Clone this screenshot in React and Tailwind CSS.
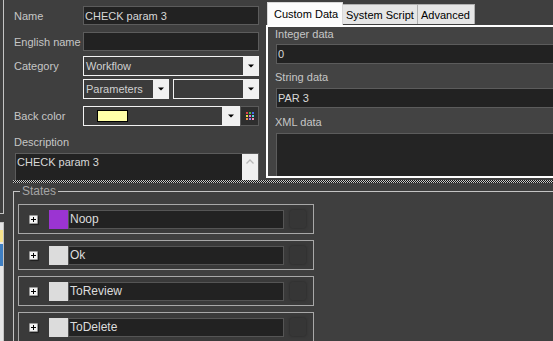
const Arrow = () => (
  <svg width="6" height="4" viewBox="0 0 6 4"><path d="M0 0.5h6L3 3.5z" fill="#000" /></svg>
);

function Combo({ w, text }) {
  return (
    <div className={`${w} h-[20px] border border-[#f2f2f2] bg-[#3b3b3b] flex items-stretch`}>
      <div className="flex-1 flex items-center pl-[2px] text-[#d0d0d0] whitespace-nowrap overflow-hidden">{text}</div>
      <div className="w-[15px] bg-[#f0f0f0] flex items-center justify-center">
        <Arrow />
      </div>
    </div>
  );
}

function TextBox({ w, text, h = "h-[19px]" }) {
  return (
    <div className={`${w} ${h} border border-[#5c5c5c] bg-[#222222] flex items-center pl-[1px] text-[#d8d8d8] whitespace-nowrap`}>
      {text}
    </div>
  );
}

function Plus() {
  return (
    <div className="w-[9px] h-[9px] bg-[#f2f2f2] border border-[#9a9a9a] rounded-[1px] flex items-center justify-center shadow-[1px_1px_1px_rgba(0,0,0,0.5)]">
      <svg width="5" height="5" viewBox="0 0 5 5"><path d="M0 2.5h5M2.5 0v5" stroke="#000" strokeWidth="1" /></svg>
    </div>
  );
}

function StateRow({ name, color }) {
  return (
    <div className="w-[296px] h-[30px] shrink-0 border border-[#a8a8a8] bg-[#3a3a3a] flex items-center pl-[10px]">
      <Plus />
      <div className={`ml-[11px] w-[19px] h-[19px] ${color}`} />
      <div className="w-[216px] h-[19px] border border-[#555555] bg-[#222222] flex items-center pl-[1px] text-[12px] text-[#dcdcdc]">
        {name}
      </div>
      <div className="ml-[6px] w-[16px] h-[18px] bg-[#363636] rounded-[2px] shadow-[0_0_3px_rgba(0,0,0,0.35)]" />
    </div>
  );
}

const gridColors = ["bg-[#e0404a]", "bg-[#48c048]", "bg-[#4868e8]", "bg-[#e8e048]", "bg-[#e868d8]", "bg-[#58d8e0]", "bg-[#f09048]", "bg-[#9878f0]", "bg-[#f090b8]"];

export default function App() {
  return (
    <div className="w-[553px] h-[341px] overflow-hidden bg-[#3f3f3f] flex font-['Liberation_Sans',Arial,sans-serif] text-[11px] leading-[12px] text-[#c6c6c6]">
      {/* left strip */}
      <div className="w-[12px] shrink-0 flex flex-col">
        <div className="w-[4px] h-[214px] border-r border-b border-[#c4c4c4]" />
        <div className="mt-[8px] w-[4px] flex-1 border-t border-r border-[#c4c4c4] bg-[#e6e6e6] flex flex-col">
          <div className="mt-[7px] h-[12px] bg-[#f6e28c]" />
          <div className="mt-[2px] h-[22px] bg-[#3f7fc2]" />
        </div>
      </div>

      {/* main */}
      <div className="flex-1 min-w-0 flex flex-col">
        <div className="h-[180px] flex shrink-0">
          {/* form */}
          <div className="w-[250px] shrink-0 pl-[2px] pt-[6px] flex flex-col">
            <div className="flex h-[19px] items-center">
              <div className="w-[69px]">Name</div>
              <TextBox w="w-[176px]" text="CHECK param 3" />
            </div>
            <div className="flex h-[19px] items-center mt-[7px]">
              <div className="w-[69px] whitespace-nowrap">English name</div>
              <TextBox w="w-[176px]" text="" />
            </div>
            <div className="flex h-[20px] items-center mt-[5px]">
              <div className="w-[69px]">Category</div>
              <Combo w="w-[176px]" text="Workflow" />
            </div>
            <div className="flex h-[20px] items-center mt-[3px] pl-[69px] gap-[4px]">
              <Combo w="w-[86px]" text="Parameters" />
              <Combo w="w-[86px]" text="" />
            </div>
            <div className="flex h-[20px] items-center mt-[7px]">
              <div className="w-[69px]">Back color</div>
              <div className="w-[157px] h-[20px] border border-[#f2f2f2] bg-[#3b3b3b] flex items-stretch">
                <div className="flex-1 flex items-center pl-[13px]">
                  <div className="w-[31px] h-[12px] border border-black bg-[#ffffa8]" />
                </div>
                <div className="w-[17px] bg-[#f0f0f0] flex items-center justify-center">
                  <Arrow />
                </div>
              </div>
              <div className="w-[19px] h-[20px] border border-[#5a5a5a] bg-[#2e2e2e] flex items-center justify-center">
                <div className="grid grid-cols-3 gap-[1px]">
                  {gridColors.map((c, i) => (
                    <div key={i} className={`w-[2px] h-[2px] ${c}`} />
                  ))}
                </div>
              </div>
            </div>
            <div className="mt-[10px] h-[12px]">Description</div>
            <div className="mt-[5px] ml-[1px] w-[244px] flex-1 border border-[#5c5c5c] border-b-0 bg-[#222222] flex">
              <div className="flex-1 pl-[1px] pt-[2px] text-[#d8d8d8]">CHECK param 3</div>
              <div className="w-[16px] bg-[#f0f0f0] flex justify-center pt-[5px]">
                <svg width="8" height="5" viewBox="0 0 8 5"><path d="M0.5 4.5L4 1l3.5 3.5" stroke="#b8b8b8" strokeWidth="1.3" fill="none" /></svg>
              </div>
            </div>
          </div>

          {/* tab panel */}
          <div className="flex-1 min-w-0 pl-[4px] pt-[2px] flex flex-col">
            <div className="h-[23px] flex items-end pl-[1px] text-[11px] text-black whitespace-nowrap">
              <div className="w-[76px] h-[23px] bg-[#fcfcfc] border-t border-l border-r border-[#d8d8d8] flex items-center pl-[6px]">Custom Data</div>
              <div className="w-[75px] h-[20px] bg-[#e6e6e6] border-t border-r border-[#b0b0b0] flex items-center pl-[3px] mb-[1px]">System Script</div>
              <div className="w-[57px] h-[20px] bg-[#e6e6e6] border-t border-r border-[#b0b0b0] flex items-center pl-[3px] mb-[1px]">Advanced</div>
            </div>
            <div className="h-[153px] mr-[-12px] border-2 border-white bg-[#434343] flex flex-col pl-[7px] pt-[1px]">
              <div className="h-[12px]">Integer data</div>
              <div className="mt-[4px] ml-[1px]">
                <TextBox w="w-full" h="h-[20px]" text="0" />
              </div>
              <div className="mt-[7px] h-[12px]">String data</div>
              <div className="mt-[5px] ml-[1px]">
                <TextBox w="w-full" h="h-[20px]" text="PAR 3" />
              </div>
              <div className="mt-[8px] h-[12px]">XML data</div>
              <div className="mt-[5px] ml-[1px] flex-1 border border-[#5c5c5c] border-b-0 bg-[#242424]" />
            </div>
          </div>
        </div>

        {/* splitter */}
        <div className="h-[3px] ml-[1px] shrink-0 bg-[repeating-conic-gradient(#111_0%_25%,#c8c8c8_0%_50%)] bg-[length:2px_2px]" />

        {/* states */}
        <div className="relative mt-[8px] ml-[1px] flex-1 border-t border-l border-[#c4c4c4] pt-[12px] pl-[4px] flex flex-col gap-[6px]">
          <div className="absolute top-[-7px] left-[6px] px-[2px] bg-[#3f3f3f] text-[#a4a4a4] text-[12px] leading-[13px]">States</div>
          <StateRow name="Noop" color="bg-[#9b34d2]" />
          <StateRow name="Ok" color="bg-[#dcdcdc]" />
          <StateRow name="ToReview" color="bg-[#dcdcdc]" />
          <StateRow name="ToDelete" color="bg-[#dcdcdc]" />
        </div>
      </div>
    </div>
  );
}
